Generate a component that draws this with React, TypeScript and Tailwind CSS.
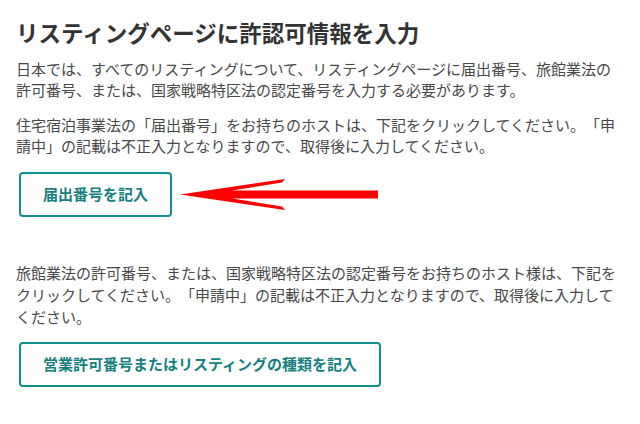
const font = { fontFamily: '"Noto Sans CJK JP", "Noto Sans", sans-serif' };

function Arrow() {
  return (
    <svg width="200" height="34" viewBox="0 0 200 34" className="ml-[8px] shrink-0">
      <polygon
        fill="#ff0000"
        points="0,16.5 105,1 102,4.5 52,12.5 198,12.5 198,20.5 52,20.5 102,28.5 105,32"
      />
    </svg>
  );
}

function OutlineButton({ label }: { label: string }) {
  return (
    <button
      type="button"
      className="ml-[3px] h-[45px] rounded-[4px] border-2 border-[#12908f] bg-white px-[22px] text-[15px] font-bold text-[#167f80]"
    >
      {label}
    </button>
  );
}

export default function App() {
  return (
    <div
      className="h-[424px] w-[640px] bg-white px-4 pt-[18px] text-[#484848] [text-spacing-trim:space-all]"
      style={font}
    >
      <h1 className="text-[22.5px] font-bold leading-[28px] text-[#333333]">リスティングページに許認可情報を入力</h1>
      <p className="mt-[12px] w-[608px] text-[15px] leading-[21px]">
        日本では、すべてのリスティングについて、リスティングページに届出番号、旅館業法の許可番号、または、国家戦略特区法の認定番号を入力する必要があります。
      </p>
      <p className="mt-[14px] w-[608px] text-[15px] leading-[21px]">
        住宅宿泊事業法の「届出番号」をお持ちのホストは、下記をクリックしてください。「申請中」の記載は不正入力となりますので、取得後に入力してください。
      </p>
      <div className="mt-[16px] flex items-center">
        <OutlineButton label="届出番号を記入" />
        <Arrow />
      </div>
      <p className="mt-[45px] w-[608px] text-[15px] leading-[22px]">
        旅館業法の許可番号、または、国家戦略特区法の認定番号をお持ちのホスト様は、下記をクリックしてください。「申請中」の記載は不正入力となりますので、取得後に入力してください。
      </p>
      <div className="mt-[14px]">
        <OutlineButton label="営業許可番号またはリスティングの種類を記入" />
      </div>
    </div>
  );
}
